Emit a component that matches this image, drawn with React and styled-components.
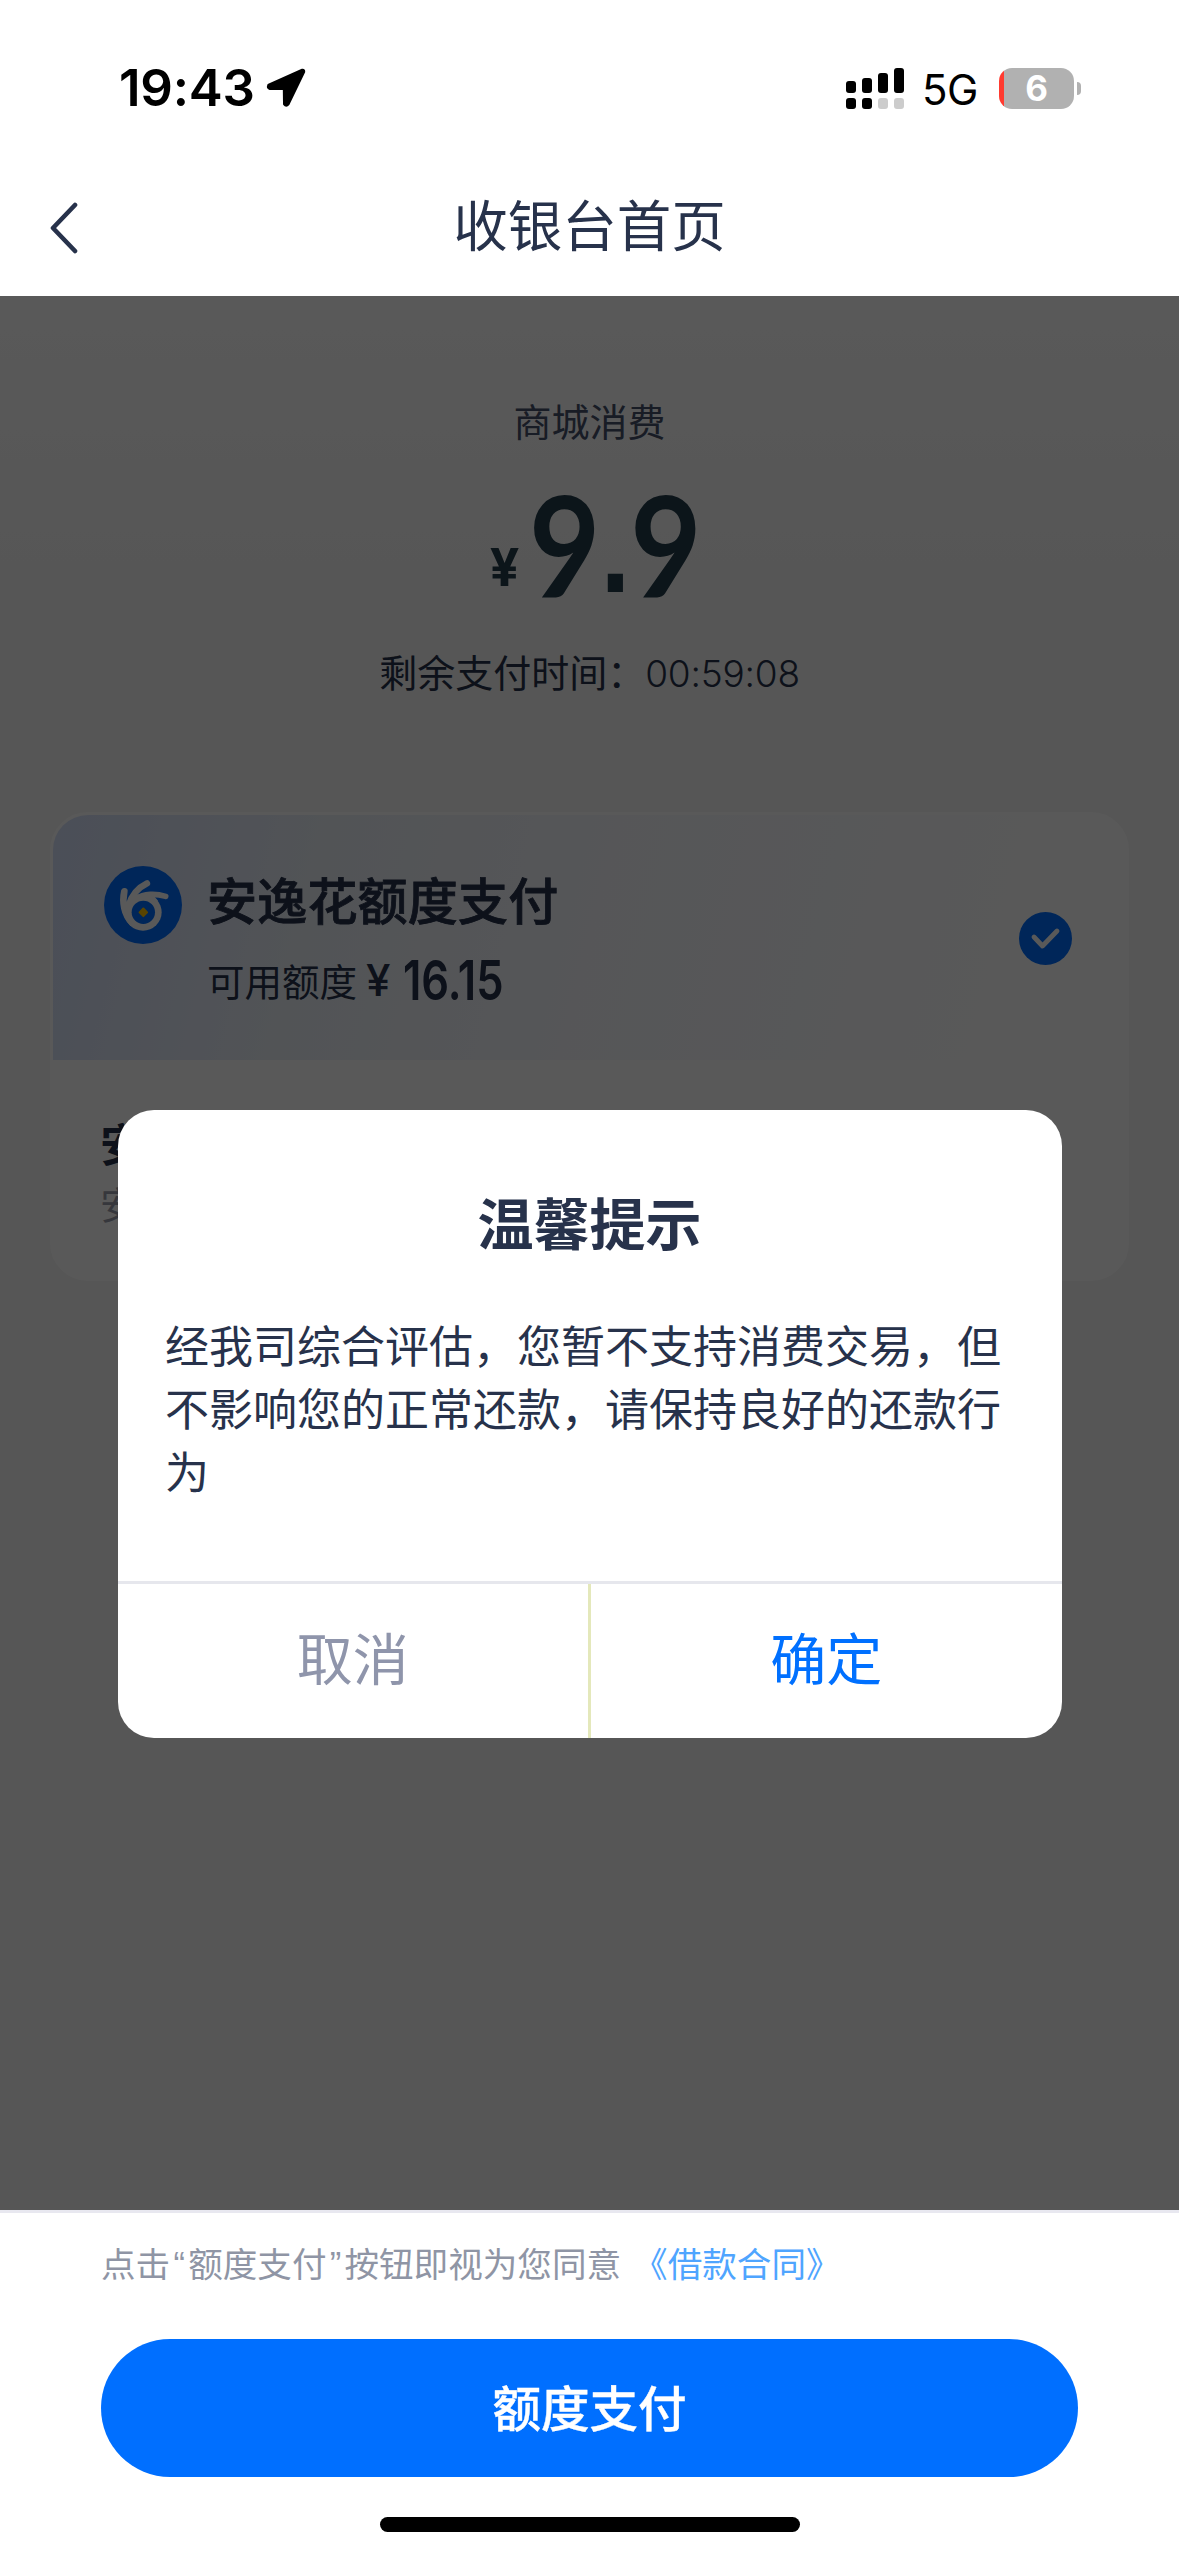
import React, {useState} from 'react';
import styled, {createGlobalStyle} from 'styled-components';

const DIALOG_BUTTONS = [
  {id: 1, label: '取消', color: '#8f95ab'},
  {id: 2, label: '确定', color: '#0070ff'},
];

const SIGNAL_BARS = [
  {id: 1, height: 12, active: true},
  {id: 2, height: 15, active: true},
  {id: 3, height: 20, active: false},
  {id: 4, height: 25, active: false},
];

const LocationIcon = () => (
    <svg width="40" height="40" viewBox="0 0 40 40">
      <path
          d="M36.5 2.5 L3 17.5 Q2 19.8 3.8 20.1 L18.6 20.3 L18.8 36 Q20.2 38 21.8 36 L37.4 3.8 Q37.6 2.4 36.5 2.5 Z"
          fill="#000" stroke="#000" strokeWidth="3.6" strokeLinejoin="round"/>
    </svg>
);

const BackIcon = () => (
    <svg width="30" height="52" viewBox="0 0 30 52">
      <path d="M26 3 L4 26 L26 49" fill="none" stroke="#27324b"
            strokeWidth="4.6" strokeLinecap="round" strokeLinejoin="round"/>
    </svg>
);

const LogoIcon = () => (
    <svg width="78" height="78" viewBox="0 0 234 234">
      <circle cx="117" cy="117" r="117" fill="#006dff"/>
      <g fill="none" stroke="#fff" strokeLinecap="round">
        <path d="M61 76 C54 108 60 146 84 170" strokeWidth="20"/>
        <path d="M74 118 C82 90 100 66 129 52" strokeWidth="19"/>
        <path d="M96 98 C120 82 156 82 185 91" strokeWidth="17"/>
      </g>
      <path d="M70 112 L92 90 L150 90 L162 104 L150 120 L96 134 L74 140 Z"
            fill="#fff"/>
      <ellipse cx="117" cy="139" rx="56" ry="55" fill="#fff"/>
      <circle cx="118" cy="139" r="35" fill="#006dff"/>
      <rect x="107" y="128" width="22" height="22" rx="3" fill="#ffc400"
            transform="rotate(45 118 139)"/>
    </svg>
);

const CheckIcon = () => (
    <svg width="53" height="53" viewBox="0 0 53 53">
      <circle cx="26.5" cy="26.5" r="26.5" fill="#006dff"/>
      <path d="M15 25 L23.5 34 L38 19" fill="none" stroke="#fff"
            strokeWidth="4.8" strokeLinecap="round" strokeLinejoin="round"/>
    </svg>
);

const App = () => {
  const [isDialogOpen, setIsDialogOpen] = useState(true);

  return (
      <Page>
        <GlobalStyle/>
        <StatusBar>
          <StatusLeft>
            <Clock>19:43</Clock>
            <LocationIcon/>
          </StatusLeft>
          <StatusRight>
            <Signal>
              {SIGNAL_BARS.map((bar) => (
                  <SignalColumn key={bar.id}>
                    <SignalBar $height={bar.height}/>
                    <SignalDot $active={bar.active}/>
                  </SignalColumn>
              ))}
            </Signal>
            <Network>5G</Network>
            <Battery>6</Battery>
            <BatteryTip/>
          </StatusRight>
        </StatusBar>
        <NavBar>
          <BackButton><BackIcon/></BackButton>
          <NavTitle>收银台首页</NavTitle>
          <NavSpace/>
        </NavBar>

        <Body>
          <Merchant>商城消费</Merchant>
          <Amount>
            <AmountSign>¥</AmountSign>
            <AmountNumber>9<AmountDot>.</AmountDot>9</AmountNumber>
          </Amount>
          <Countdown>剩余支付时间：<Timer>00:59:08</Timer></Countdown>

          <PayCard>
            <PayOption>
              <LogoIcon/>
              <PayInfo>
                <PayName>安逸花额度支付</PayName>
                <PayQuota>
                  可用额度
                  <QuotaSign>¥</QuotaSign>
                  <QuotaNumber>16.15</QuotaNumber>
                </PayQuota>
              </PayInfo>
              <CheckIcon/>
            </PayOption>
            <OtherOption>
              <OtherName>安</OtherName>
              <OtherDesc>安</OtherDesc>
            </OtherOption>
          </PayCard>

          {isDialogOpen && (
              <Overlay>
                <Dialog>
                  <DialogTitle>温馨提示</DialogTitle>
                  <DialogText>
                    经我司综合评估，您暂不支持消费交易，但不影响您的正常还款，请保持良好的还款行为
                  </DialogText>
                  <DialogActions>
                    {DIALOG_BUTTONS.map((button) => (
                        <DialogButton key={button.id} $color={button.color}
                                      onClick={() => setIsDialogOpen(false)}>
                          {button.label}
                        </DialogButton>
                    ))}
                  </DialogActions>
                </Dialog>
              </Overlay>
          )}
        </Body>

        <Footer>
          <Agreement>
            点击<Quote>“</Quote>额度支付<Quote>”</Quote>按钮即视为您同意
            <AgreementLink>《借款合同》</AgreementLink>
          </Agreement>
          <PayButton>额度支付</PayButton>
          <HomeIndicator/>
        </Footer>
      </Page>
  );
};

export default App;

const GlobalStyle = createGlobalStyle`
  * {
    box-sizing: border-box;
  }

  body {
    margin: 0;
    background: #fff;
  }

  svg {
    display: block;
    flex-shrink: 0;
  }

  button {
    padding: 0;
    border: none;
    background: none;
    font-family: inherit;
    cursor: pointer;
  }
`;

const Page = styled.div`
  display: flex;
  flex-direction: column;
  width: 1179px;
  height: 2556px;
  overflow: hidden;
  background: #fff;
  color: #27324b;
  font-family: Inter, 'Noto Sans CJK SC', sans-serif;
`;

const StatusBar = styled.div`
  display: flex;
  justify-content: space-between;
  align-items: center;
  height: 160px;
  padding: 16px 98px 0 119px;
  color: #000;
`;

const StatusLeft = styled.div`
  display: flex;
  align-items: center;
  gap: 11px;
`;

const Clock = styled.div`
  font-size: 51px;
  font-weight: 600;
  line-height: 60px;
  letter-spacing: -0.2px;
`;

const StatusRight = styled.div`
  display: flex;
  align-items: center;
`;

const Signal = styled.div`
  display: flex;
  align-items: flex-end;
  gap: 6px;
`;

const SignalColumn = styled.div`
  display: flex;
  flex-direction: column;
  gap: 5px;
`;

const SignalBar = styled.div`
  width: 10px;
  height: ${({$height}) => $height}px;
  border-radius: 3px;
  background: #000;
`;

const SignalDot = styled.div`
  width: 10px;
  height: 11px;
  border-radius: 3px;
  background: ${({$active}) => ($active ? '#000' : '#ccc')};
`;

const Network = styled.div`
  width: 57px;
  margin: 4px 20px 0 18px;
  font-size: 42px;
  line-height: 44px;
  letter-spacing: -0.5px;
`;

const Battery = styled.div`
  width: 75px;
  height: 41px;
  border-radius: 13px;
  background: linear-gradient(90deg, #ff3b30 5px, #b1b1b1 5px);
  color: #fff;
  font-size: 35px;
  font-weight: 700;
  line-height: 41px;
  text-align: center;
`;

const BatteryTip = styled.div`
  width: 4px;
  height: 13px;
  margin-left: 3px;
  border-radius: 0 6px 6px 0;
  background: #b1b1b1;
`;

const NavBar = styled.div`
  display: flex;
  align-items: center;
  justify-content: space-between;
  height: 136px;
  padding: 0 49px;
`;

const BackButton = styled.button`
  width: 60px;
`;

const NavTitle = styled.div`
  margin-bottom: 4px;
  font-size: 54.5px;
  line-height: 70px;
`;

const NavSpace = styled.div`
  width: 60px;
`;

const Body = styled.div`
  position: relative;
  display: flex;
  flex-direction: column;
  height: 1914px;
  padding: 101px 50px 0;
  background: linear-gradient(#fff, #f6f6f6 300px);
  text-align: center;
`;

const Merchant = styled.div`
  color: #45506a;
  font-size: 38px;
  line-height: 50px;
`;

const Amount = styled.div`
  display: flex;
  justify-content: center;
  height: 150px;
  margin-top: 24px;
  color: #233c4b;
  line-height: 144px;
`;

const AmountSign = styled.span`
  padding-top: 25px;
  font-size: 52px;
  font-weight: 700;
`;

const AmountNumber = styled.span`
  width: 160px;
  margin-left: 10px;
  font-family: Lato, sans-serif;
  font-size: 140px;
  font-weight: 700;
  text-align: left;
  white-space: nowrap;
  transform: scaleX(0.88);
  transform-origin: left;
`;

const AmountDot = styled.span`
  font-family: 'Liberation Sans', sans-serif;
  font-size: 122px;
  line-height: 1;
  vertical-align: 5px;
`;

const Countdown = styled.div`
  height: 50px;
  margin-top: 27px;
  font-size: 38px;
  line-height: 50px;
`;

const Timer = styled.span`
  font-size: 37px;
  font-weight: 350;
  letter-spacing: -0.2px;
`;

const PayCard = styled.div`
  height: 469px;
  margin-top: 114px;
  border: 3px solid #fff;
  border-radius: 38px;
  overflow: hidden;
  background: #fff;
  text-align: left;
`;

const PayOption = styled.div`
  display: flex;
  align-items: flex-start;
  height: 245px;
  padding: 51px 54px 0 51px;
  background: linear-gradient(104deg, #d6e1fb, #ebf0f7 25%, #f5f7fd 50%, #fff 90%);

  > svg:last-child {
    margin-top: 46px;
  }
`;

const PayInfo = styled.div`
  flex: 1;
  margin-left: 25px;
`;

const PayName = styled.div`
  margin-top: 6px;
  font-size: 50px;
  font-weight: 500;
  line-height: 60px;
  letter-spacing: 0.2px;
  -webkit-text-stroke: 0.8px currentColor;
`;

const PayQuota = styled.div`
  display: flex;
  height: 60px;
  margin-top: 20px;
  font-size: 37.5px;
  line-height: 62px;
`;

const QuotaSign = styled.span`
  margin-left: 9px;
  font-size: 44px;
  font-weight: 500;
  line-height: 56px;
`;

const QuotaNumber = styled.span`
  margin-left: 12px;
  font-size: 55px;
  font-weight: 600;
  line-height: 56px;
  transform: scaleX(0.79);
  transform-origin: left;
`;

const OtherOption = styled.div`
  padding: 58px 47px;
`;

const OtherName = styled.div`
  font-size: 45px;
  font-weight: 700;
  line-height: 56px;
`;

const OtherDesc = styled.div`
  margin-top: 8px;
  color: #9a9eab;
  font-size: 38px;
  line-height: 46px;
`;

const Overlay = styled.div`
  position: absolute;
  inset: 0;
  display: flex;
  justify-content: center;
  align-items: flex-start;
  padding-top: 814px;
  background: rgba(0, 0, 0, 0.65);
`;

const Dialog = styled.div`
  display: flex;
  flex-direction: column;
  width: 944px;
  height: 628px;
  border-radius: 36px;
  overflow: hidden;
  background: #fff;
`;

const DialogTitle = styled.div`
  margin-top: 80px;
  font-size: 56px;
  font-weight: 700;
  line-height: 70px;
`;

const DialogText = styled.div`
  flex: 1;
  margin-top: 56px;
  padding: 0 48px 0 47.5px;
  font-size: 44px;
  line-height: 63px;
  text-align: left;
`;

const DialogActions = styled.div`
  display: flex;
  height: 157px;
  border-top: 3px solid #e6e7ed;
`;

const DialogButton = styled.button`
  flex: 1;
  padding-bottom: 3px;
  color: ${({$color}) => $color};
  font-size: 56px;
  line-height: 70px;

  & + & {
    border-left: 3px solid #e4e8bb;
  }
`;

const Footer = styled.div`
  display: flex;
  flex-direction: column;
  height: 346px;
  padding: 28px 101px 0;
  border-top: 3px solid #e8e8f0;
`;

const Agreement = styled.div`
  display: flex;
  height: 46px;
  color: #8f95a5;
  font-size: 34.6px;
  line-height: 46px;
`;

const Quote = styled.span`
  width: 18px;
  font-family: 'Liberation Sans', sans-serif;
  text-align: center;
`;

const AgreementLink = styled.a`
  margin-left: 12px;
  color: #4fa5ff;
`;

const PayButton = styled.button`
  height: 138px;
  margin-top: 52px;
  padding-bottom: 5px;
  border-radius: 69px;
  background: #006fff;
  color: #fff;
  font-size: 48.5px;
  font-weight: 500;
  -webkit-text-stroke: 0.4px currentColor;
`;

const HomeIndicator = styled.div`
  align-self: center;
  width: 420px;
  height: 15px;
  margin-top: 40px;
  border-radius: 8px;
  background: #000;
`;
